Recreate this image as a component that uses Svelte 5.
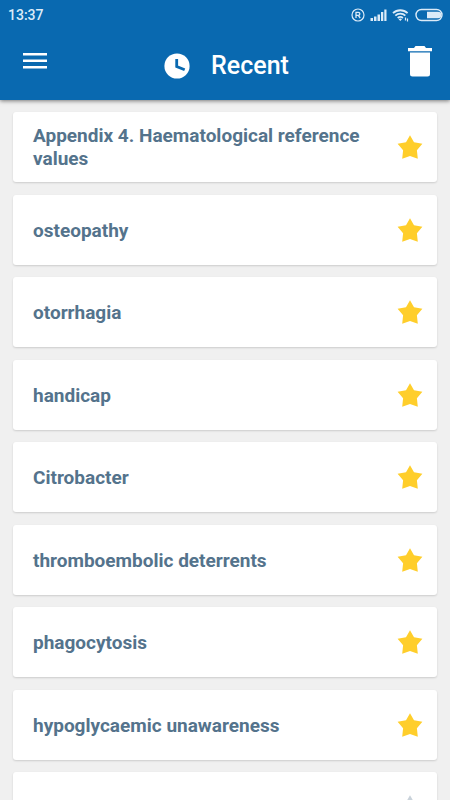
<script lang="ts">
	interface Entry {
		title: string;
		starred: boolean;
	}

	let entries: Entry[] = $state([
		{ title: 'Appendix 4. Haematological reference values', starred: true },
		{ title: 'osteopathy', starred: true },
		{ title: 'otorrhagia', starred: true },
		{ title: 'handicap', starred: true },
		{ title: 'Citrobacter', starred: true },
		{ title: 'thromboembolic deterrents', starred: true },
		{ title: 'phagocytosis', starred: true },
		{ title: 'hypoglycaemic unawareness', starred: true },
		{ title: '', starred: false }
	]);

	function toggle(entry: Entry) {
		entry.starred = !entry.starred;
	}

	function clear() {
		entries = [];
	}
</script>

<div class="app">
	<header>
		<div class="status">
			<span>13:37</span>
			<div class="status-icons">
				<svg width="14" height="14" viewBox="0 0 14 14" fill="none" stroke="currentColor">
					<circle cx="7" cy="7" r="6" stroke-width="1.2" />
					<path d="M5 10V4.3h2.3a1.5 1.5 0 0 1 0 3.1H5M7.3 7.4 9.2 10" stroke-width="1.3" />
				</svg>
				<svg width="17" height="14" viewBox="0 0 17 14" fill="currentColor">
					<path d="M0.500 10h2.500v3H0.500zM4 8.500h2.500V13H4zM7.500 6.500H10V13H7.500zM11 4h2.300v9H11zM14.300 1.500h2.200V13h-2.200z" />
				</svg>
				<svg width="18" height="14" viewBox="0 0 18 14" fill="none" stroke="currentColor">
					<path d="M1 5.200a10.500 10.500 0 0 1 14.600 0M3.300 7.700a7.200 7.200 0 0 1 10 0M5.700 10a3.900 3.900 0 0 1 5.200 0" stroke-width="1.800" />
					<path d="M6.600 11.200a2.500 2.500 0 0 1 3.400 0L8.300 13z" fill="currentColor" stroke="none" />
					<path d="M13.500 9.500v3M15.500 10.500v3" stroke-width="1.200" />
				</svg>
				<svg width="28" height="14" viewBox="0 0 28 14">
					<rect x="1" y="1.500" width="26" height="11" rx="5.500" fill="none" stroke="currentColor" stroke-width="1.400" />
					<path d="M12 3.700h11a3.300 3.300 0 0 1 0 6.600H12z" fill="currentColor" />
				</svg>
			</div>
		</div>
		<div class="toolbar">
			<button class="icon-button" aria-label="Menu">
				<svg width="24" height="18" viewBox="0 0 24 18" fill="currentColor">
					<path d="M0 1h24v2.500H0zM0 7.500h24V10H0zM0 14h24v2.500H0z" />
				</svg>
			</button>
			<h1>
				<svg width="26" height="26" viewBox="0 0 26 26">
					<circle cx="13" cy="13" r="12.600" fill="currentColor" />
					<path d="M12.700 6v7.500l8 3.300" fill="none" stroke="#0969b0" stroke-width="2.800" />
				</svg>
				Recent
			</h1>
			<button class="icon-button" aria-label="Clear recent" onclick={clear}>
				<svg width="24" height="32" viewBox="0 0 24 32" fill="currentColor">
					<path d="M0 3h6l1.500-2h9L18 3h6v3.300H0zM2 7.500h20V29a2.500 2.500 0 0 1-2.500 2.500h-15A2.500 2.500 0 0 1 2 29z" />
				</svg>
			</button>
		</div>
	</header>

	<ul class="list">
		{#each entries as entry}
			<li class="card">
				<span class="title">{entry.title}</span>
				<button
					class="star"
					class:starred={entry.starred}
					aria-label="Favourite"
					aria-pressed={entry.starred}
					onclick={() => toggle(entry)}
				>
					<svg width="26" height="26" viewBox="0 0 26 26" fill="currentColor">
						<path d="M13 1.200l4 7 8.400 1.600-5.500 6.400 0.900 8.600L13 22l-7.800 2.800 0.900-8.600L0.600 9.800 9 8.200z" />
					</svg>
				</button>
			</li>
		{/each}
	</ul>
</div>

<style>
	:global(body) {
		margin: 0;
		background: #f0f0f0;
	}

	.app {
		display: flex;
		flex-direction: column;
		height: 100vh;
		overflow: hidden;
		font-family: Roboto, 'Noto Sans', sans-serif;
		background: #f0f0f0;
	}

	header {
		flex: none;
		color: #fff;
		background: #0969b0;
		box-shadow: 0 1px 4px rgba(0, 0, 0, 0.5);
		z-index: 1;
	}

	.status {
		display: flex;
		align-items: center;
		justify-content: space-between;
		height: 30px;
		padding: 0 7px 0 8px;
		font-size: 14px;
		font-weight: 500;
		color: #dcebf8;
	}

	.status-icons {
		display: flex;
		align-items: center;
		gap: 5px;
	}

	svg {
		display: block;
	}

	.toolbar {
		display: flex;
		align-items: center;
		justify-content: space-between;
		height: 62px;
		padding: 0 18px 8px 23px;
	}

	.icon-button,
	.star {
		padding: 0;
		border: 0;
		background: none;
		color: inherit;
		cursor: pointer;
	}

	h1 {
		display: flex;
		align-items: center;
		gap: 21px;
		margin: 10px 2px 0 0;
		font-size: 25px;
		font-weight: 500;
		line-height: 32px;
	}

	.list {
		flex: 1;
		min-height: 0;
		margin: 0;
		padding: 12px 13px;
		overflow: hidden;
		list-style: none;
	}

	.card {
		display: flex;
		align-items: center;
		justify-content: space-between;
		gap: 16px;
		box-sizing: border-box;
		min-height: 70px;
		margin-bottom: 12px;
		padding: 10px 14px 10px 20px;
		border-radius: 3px;
		background: #fff;
		box-shadow: 0 1px 2px rgba(0, 0, 0, 0.15);
	}

	.card:nth-child(odd) {
		margin-bottom: 13px;
	}

	.title {
		font-size: 19px;
		font-weight: 700;
		line-height: 23px;
		color: #54738c;
	}

	.star {
		flex: none;
		color: #c9d2da;
	}

	.star.starred {
		color: #ffce2b;
	}
</style>
